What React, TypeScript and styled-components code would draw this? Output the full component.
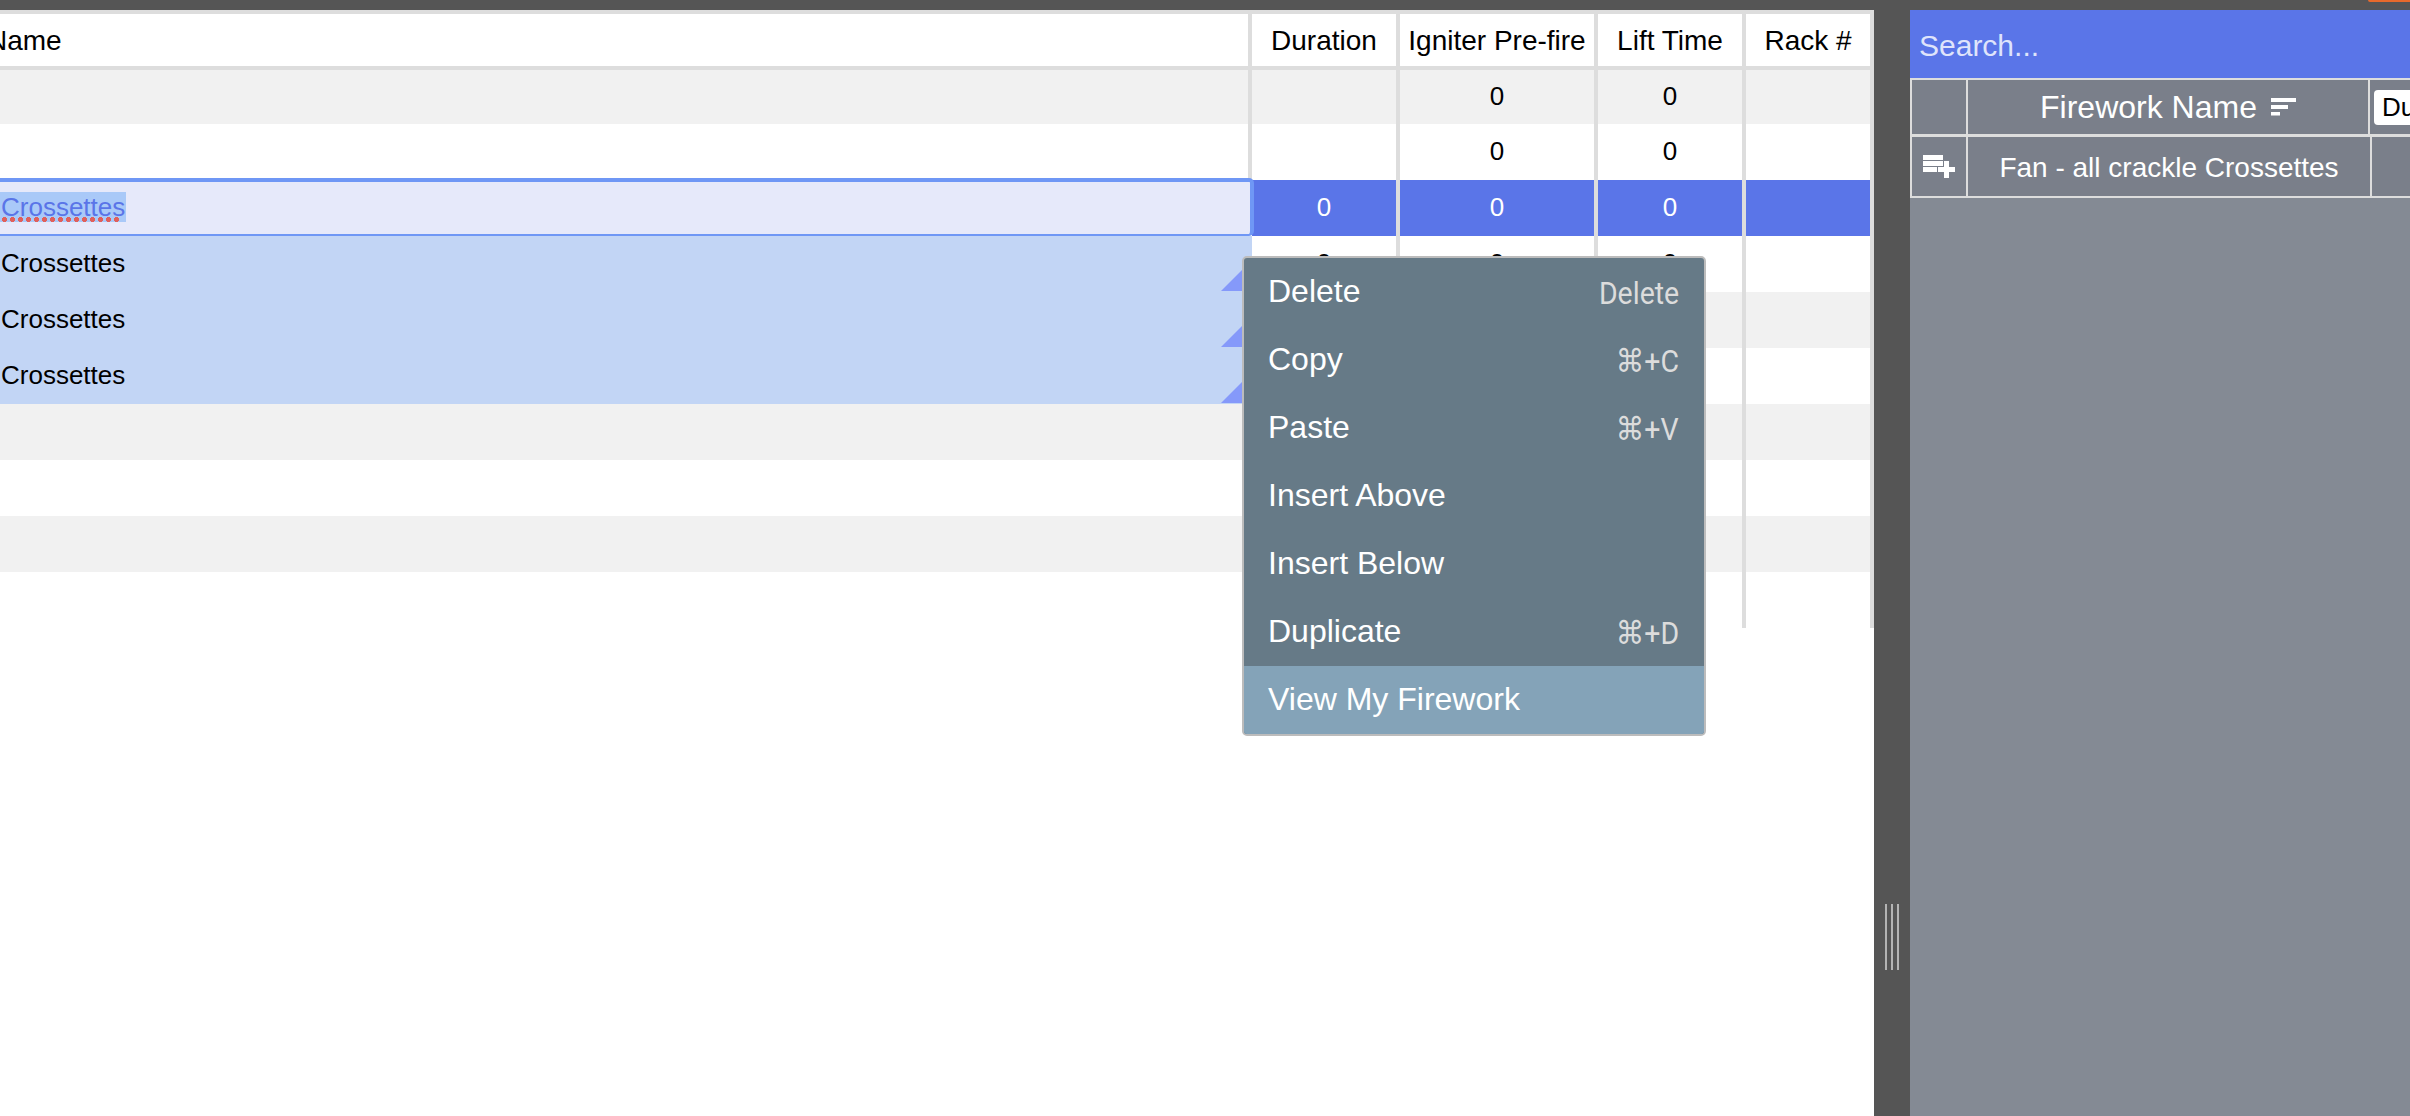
import styled, { createGlobalStyle } from "styled-components";

const GlobalStyle = createGlobalStyle`
  html, body {
    margin: 0;
    padding: 0;
    background: #555555;
    overflow: hidden;
  }
  * {
    box-sizing: border-box;
  }
`;

const FONT = `"Liberation Sans", Arial, sans-serif`;
const TABLE_COLUMNS = "1252px 148px 198px 148px 128px";

const Page = styled.div`
  width: 2410px;
  height: 1116px;
  overflow: hidden;
  background: #555555;
  font-family: ${FONT};
  display: flex;
  flex-direction: column;
`;

const TopBar = styled.div`
  height: 10px;
  flex: none;
  display: flex;
  justify-content: flex-end;
`;

const OrangeTab = styled.div`
  width: 42px;
  height: 2px;
  background: #e8692c;
  border-bottom-left-radius: 2px;
`;

const Workspace = styled.div`
  flex: 1;
  display: flex;
  min-height: 0;
`;

const TablePane = styled.div`
  width: 1874px;
  flex: none;
  position: relative;
  background: #ffffff;
  border-top: 4px solid #dddddd;
`;

const HeaderRow = styled.div`
  display: grid;
  grid-template-columns: ${TABLE_COLUMNS};
  height: 56px;
  border-bottom: 4px solid #dddddd;
`;

const HeaderCell = styled.div`
  display: flex;
  align-items: center;
  justify-content: center;
  padding-top: 2px;
  font-size: 28px;
  color: #000000;
  border-right: 4px solid #dddddd;
`;

const NameHeaderCell = styled(HeaderCell)`
  justify-content: flex-start;
  overflow: hidden;
`;

const NameHeaderText = styled.span`
  margin-left: -13px;
`;

const Row = styled.div<{ $bg: string; $first?: boolean }>`
  display: grid;
  grid-template-columns: ${TABLE_COLUMNS};
  height: ${(p) => (p.$first ? 54 : 56)}px;
  background: ${(p) => p.$bg};
`;

const Cell = styled.div<{ $active?: boolean }>`
  display: flex;
  align-items: center;
  justify-content: center;
  padding-bottom: 2px;
  font-size: 26px;
  color: ${(p) => (p.$active ? "#ffffff" : "#000000")};
  background: ${(p) => (p.$active ? "#5a75e8" : "transparent")};
  border-right: 4px solid #dddddd;
`;

const NameCell = styled.div<{ $inRange?: boolean }>`
  position: relative;
  display: flex;
  align-items: center;
  padding: 0 0 2px 1px;
  font-size: 26px;
  color: #000000;
  background: ${(p) => (p.$inRange ? "#c2d5f5" : "transparent")};
  border-right: 4px solid ${(p) => (p.$inRange ? "#c2d5f5" : "#dddddd")};
`;

const FillHandle = styled.div`
  position: absolute;
  right: 0;
  bottom: 1px;
  width: 27px;
  height: 27px;
  background: #8599fa;
  clip-path: polygon(100% 0, 100% 100%, 0 100%);
`;

const EditorCell = styled.div`
  position: relative;
  z-index: 1;
  height: 58px;
  margin: -2px -2px 0 0;
  display: flex;
  align-items: center;
  font-size: 26px;
  color: #5a75e8;
  background: #e6e9fa;
  border-top: 4px solid #6f97f5;
  border-bottom: 2px solid #6f97f5;
  border-right: 4px solid #6f97f5;
  border-top-right-radius: 5px;
  border-bottom-right-radius: 5px;
`;

const SelectedText = styled.span`
  position: relative;
  display: block;
  height: 30px;
  line-height: 31px;
  padding: 0 1px 0 1px;
  background: #a9c9f8;
  margin-bottom: 2px;

  &::after {
    content: "";
    position: absolute;
    left: 2px;
    bottom: 0;
    width: 118px;
    height: 5px;
    background: radial-gradient(circle at 2.5px 2.5px, #e0605c 2.4px, transparent 2.8px) 0 0 / 8px 5px repeat-x;
  }
`;

const ContextMenu = styled.div`
  position: absolute;
  left: 1242px;
  top: 242px;
  width: 464px;
  border: 2px solid #bcbcbc;
  border-radius: 5px;
  overflow: hidden;
  background: #667a87;
  z-index: 2;
`;

const MenuItem = styled.div<{ $hover?: boolean }>`
  height: 68px;
  display: flex;
  align-items: center;
  justify-content: space-between;
  padding: 0 25px 2px 24px;
  font-size: 32px;
  color: #ffffff;
  background: ${(p) => (p.$hover ? "#84a3b8" : "transparent")};
`;

const Shortcut = styled.span`
  display: inline-block;
  font-family: Roboto, "DejaVu Sans", sans-serif;
  font-size: 32px;
  color: #dcdcdc;
  transform: scaleX(0.89);
  transform-origin: right center;
  margin-top: 3px;
`;

const Gutter = styled.div`
  width: 36px;
  flex: none;
  display: flex;
  justify-content: center;
  gap: 3.5px;
  padding-top: 894px;
`;

const GripLine = styled.div`
  width: 2.5px;
  height: 66px;
  background: #b4b4b4;
`;

const Library = styled.div`
  width: 500px;
  flex: none;
  background: #848a94;
`;

const SearchInput = styled.input`
  display: block;
  width: 100%;
  height: 68px;
  padding: 3px 0 0 9px;
  border: none;
  outline: none;
  background: #5a75e8;
  font-family: ${FONT};
  font-size: 30px;
  color: #ffffff;

  &::placeholder {
    color: #dfe4fb;
    opacity: 1;
  }
`;

const LibraryHeader = styled.div`
  display: grid;
  grid-template-columns: 56px 402px 1fr;
  height: 59px;
  background: #7a7f8a;
  border-top: 2px solid #dddddd;
  border-left: 2px solid #dddddd;
  border-bottom: 3px solid #dddddd;
`;

const LibraryRow = styled.div`
  display: grid;
  grid-template-columns: 56px 404px 1fr;
  height: 61px;
  background: #7a7f8a;
  border-left: 2px solid #dddddd;
  border-bottom: 2px solid #dddddd;
`;

const LibraryCell = styled.div`
  display: flex;
  align-items: center;
  justify-content: center;
  gap: 14px;
  color: #ffffff;
  font-size: 28px;
  border-right: 2px solid #dddddd;
`;

const LibraryNameCell = styled(LibraryCell)`
  padding-top: 2px;
`;

const LibraryHeaderCell = styled(LibraryCell)`
  font-size: 32px;
`;

const LastCell = styled.div`
  display: flex;
  align-items: center;
  padding-left: 4px;
  overflow: hidden;
`;

const DurationFilter = styled.div`
  width: 120px;
  height: 35px;
  flex: none;
  display: flex;
  align-items: center;
  padding-left: 8px;
  border-radius: 4px;
  background: #ffffff;
  font-size: 26px;
  color: #000000;
`;

const menuItems = [
  { label: "Delete", shortcut: "Delete" },
  { label: "Copy", shortcut: "⌘+C" },
  { label: "Paste", shortcut: "⌘+V" },
  { label: "Insert Above" },
  { label: "Insert Below" },
  { label: "Duplicate", shortcut: "⌘+D" },
  { label: "View My Firework", hover: true },
];

function SortIcon() {
  return (
    <svg width="25" height="18" viewBox="0 0 25 18" fill="#ffffff">
      <rect x="0" y="0" width="25" height="4" />
      <rect x="0" y="7" width="17" height="4" />
      <rect x="0" y="14" width="9" height="3.5" />
    </svg>
  );
}

function AddToListIcon() {
  return (
    <svg width="32" height="23" viewBox="0 0 32 23" fill="#ffffff">
      <rect x="0" y="0" width="20" height="5" />
      <rect x="0" y="6" width="20" height="5" />
      <rect x="0" y="12" width="14" height="5" />
      <rect x="15" y="12" width="17" height="5" />
      <rect x="21" y="6" width="5" height="17" />
    </svg>
  );
}

export default function App() {
  return (
    <Page>
      <GlobalStyle />
      <TopBar>
        <OrangeTab />
      </TopBar>
      <Workspace>
        <TablePane>
          <HeaderRow>
            <NameHeaderCell>
              <NameHeaderText>Name</NameHeaderText>
            </NameHeaderCell>
            <HeaderCell>Duration</HeaderCell>
            <HeaderCell>Igniter Pre-fire</HeaderCell>
            <HeaderCell>Lift Time</HeaderCell>
            <HeaderCell>Rack #</HeaderCell>
          </HeaderRow>

          <Row $bg="#f1f1f1" $first>
            <NameCell />
            <Cell />
            <Cell>0</Cell>
            <Cell>0</Cell>
            <Cell />
          </Row>
          <Row $bg="#ffffff">
            <NameCell />
            <Cell />
            <Cell>0</Cell>
            <Cell>0</Cell>
            <Cell />
          </Row>
          <Row $bg="#ffffff">
            <EditorCell>
              <SelectedText>Crossettes</SelectedText>
            </EditorCell>
            <Cell $active>0</Cell>
            <Cell $active>0</Cell>
            <Cell $active>0</Cell>
            <Cell $active />
          </Row>
          {["#ffffff", "#f1f1f1", "#ffffff"].map((bg, i) => (
            <Row $bg={bg} key={i}>
              <NameCell $inRange>
                Crossettes
                <FillHandle />
              </NameCell>
              <Cell>0</Cell>
              <Cell>0</Cell>
              <Cell>0</Cell>
              <Cell />
            </Row>
          ))}
          {["#f1f1f1", "#ffffff", "#f1f1f1", "#ffffff"].map((bg, i) => (
            <Row $bg={bg} key={i}>
              <NameCell />
              <Cell />
              <Cell />
              <Cell />
              <Cell />
            </Row>
          ))}

          <ContextMenu>
            {menuItems.map((item) => (
              <MenuItem $hover={item.hover} key={item.label}>
                <span>{item.label}</span>
                {item.shortcut && <Shortcut>{item.shortcut}</Shortcut>}
              </MenuItem>
            ))}
          </ContextMenu>
        </TablePane>

        <Gutter>
          <GripLine />
          <GripLine />
          <GripLine />
        </Gutter>

        <Library>
          <SearchInput placeholder="Search..." readOnly />
          <LibraryHeader>
            <LibraryCell />
            <LibraryHeaderCell>
              Firework Name
              <SortIcon />
            </LibraryHeaderCell>
            <LastCell>
              <DurationFilter>Duration</DurationFilter>
            </LastCell>
          </LibraryHeader>
          <LibraryRow>
            <LibraryCell>
              <AddToListIcon />
            </LibraryCell>
            <LibraryNameCell>Fan - all crackle Crossettes</LibraryNameCell>
            <LastCell />
          </LibraryRow>
        </Library>
      </Workspace>
    </Page>
  );
}
